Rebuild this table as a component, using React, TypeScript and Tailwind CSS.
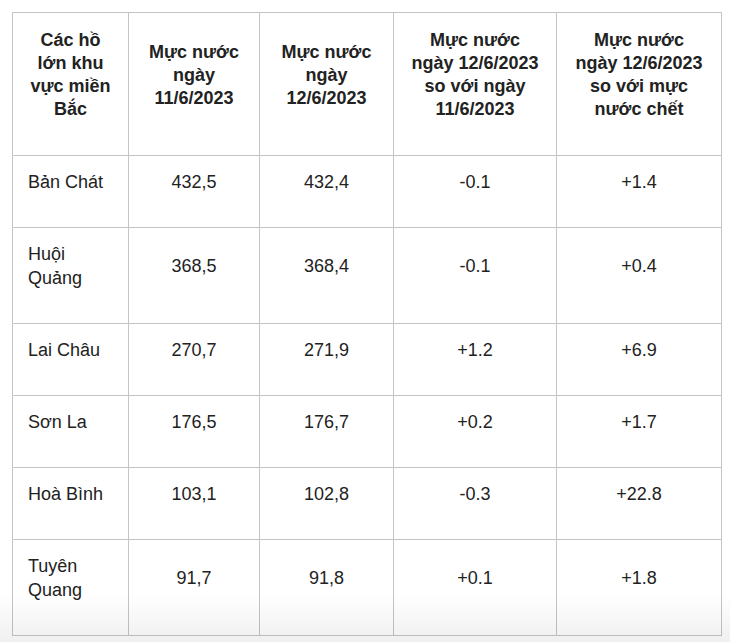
import React from "react";

const headers: React.ReactNode[] = [
  <>Các hồ<br />lớn khu<br />vực miền<br />Bắc</>,
  <>Mực nước<br />ngày<br />11/6/2023</>,
  <>Mực nước<br />ngày<br />12/6/2023</>,
  <>Mực nước<br />ngày 12/6/2023<br />so với ngày<br />11/6/2023</>,
  <>Mực nước<br />ngày 12/6/2023<br />so với mực<br />nước chết</>,
];

const rows: [React.ReactNode, string, string, string, string][] = [
  ["Bản Chát", "432,5", "432,4", "-0.1", "+1.4"],
  [<>Huội<br />Quảng</>, "368,5", "368,4", "-0.1", "+0.4"],
  ["Lai Châu", "270,7", "271,9", "+1.2", "+6.9"],
  ["Sơn La", "176,5", "176,7", "+0.2", "+1.7"],
  ["Hoà Bình", "103,1", "102,8", "-0.3", "+22.8"],
  [<>Tuyên<br />Quang</>, "91,7", "91,8", "+0.1", "+1.8"],
];

export default function App() {
  return (
    <div
      className="relative w-[730px] h-[642px] overflow-hidden bg-white text-[#222]"
      style={{ fontFamily: '"Liberation Sans", Arial, sans-serif' }}
    >
      <div className="pt-[12px] pl-[12px]">
        <table className="table-fixed border-collapse w-[709px] text-[18px]">
          <colgroup>
            <col className="w-[116px]" />
            <col className="w-[131px]" />
            <col className="w-[134px]" />
            <col className="w-[163px]" />
            <col className="w-[165px]" />
          </colgroup>
          <thead>
            <tr>
              {headers.map((h, i) => (
                <th
                  key={i}
                  className="border border-[#c4c4c4] text-center align-middle font-bold leading-[23px] pt-[16px] pb-[34px] px-[4px]"
                >
                  {h}
                </th>
              ))}
            </tr>
          </thead>
          <tbody>
            {rows.map((r, i) => (
              <tr key={i}>
                {r.map((c, j) => (
                  <td
                    key={j}
                    className={
                      "border border-[#c4c4c4] align-middle leading-[24px] pt-[14px] pb-[33px] " +
                      (j === 0 ? "text-left pl-[15px] pr-[4px]" : "text-center px-[4px]")
                    }
                  >
                    {c}
                  </td>
                ))}
              </tr>
            ))}
          </tbody>
        </table>
      </div>
      <div className="absolute left-0 right-0 top-[594px] h-[48px] bg-gradient-to-b from-black/0 to-black/[0.06] pointer-events-none" />
    </div>
  );
}
